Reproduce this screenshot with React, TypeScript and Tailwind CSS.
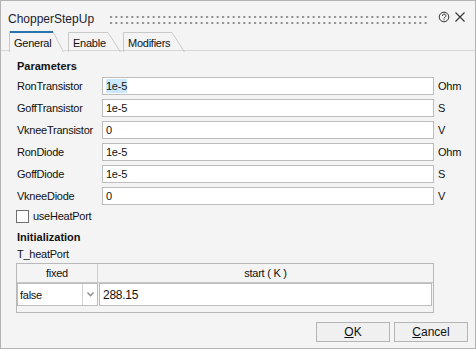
import React from "react";

const rows = [
  { label: "RonTransistor", value: "1e-5", unit: "Ohm", sel: true },
  { label: "GoffTransistor", value: "1e-5", unit: "S" },
  { label: "VkneeTransistor", value: "0", unit: "V" },
  { label: "RonDiode", value: "1e-5", unit: "Ohm" },
  { label: "GoffDiode", value: "1e-5", unit: "S" },
  { label: "VkneeDiode", value: "0", unit: "V" },
];

function Tab({ label, width, topRight, active, top }: { label: string; width: number; topRight: number; active?: boolean; top: number }) {
  return (
    <div
      className={`relative h-[21px] flex items-center ${active ? "z-10 bg-[#f4f4f4]" : ""}`}
      style={{ width }}
    >
      <svg className="absolute inset-0" width={width} height={21}>
        <path
          d={`M0.5,21 V${top + 0.5} H${topRight} L${width - 0.5},21`}
          fill="none"
          stroke="#c9c9c9"
          strokeWidth={1}
        />
        {active && <rect x={1} y={0} width={topRight - 1} height={2} fill="#2872b0" />}
      </svg>
      <span className="relative pl-[5px] pt-[2px]">{label}</span>
    </div>
  );
}

export default function App() {
  return (
    <div
      className="w-[476px] h-[349px] bg-[#f4f4f4] border border-[#b3b3b3] flex flex-col text-[11px] leading-[14px] text-[#111] tracking-[-0.25px]"
      style={{ fontFamily: "'Liberation Sans', Arial, sans-serif" }}
    >
      {/* Title bar */}
      <div className="h-[30px] flex items-center pl-[7px] pr-[9px] pt-[6px]">
        <span className="text-[12px] tracking-normal text-[#1b1b2e]">ChopperStepUp</span>
        <svg className="flex-1 h-[8px] ml-[16px] mr-[10px] mt-[1px]">
          <defs>
            <pattern id="grip" width="5.333" height="6" patternUnits="userSpaceOnUse">
              <rect x="0" y="0" width="2" height="2" fill="#8c8c8c" />
            </pattern>
          </defs>
          <rect width="100%" height="100%" fill="url(#grip)" />
        </svg>
        <div className="flex items-center gap-[4px] mb-[5px]">
          <svg width="12" height="12" viewBox="0 0 12 12">
            <circle cx="6" cy="6" r="4.8" fill="none" stroke="#333" strokeWidth="1" />
            <path d="M4.4,4.9 A1.7,1.7 0 1 1 6.9,6.3 C6.3,6.6 6,6.9 6,7.5" fill="none" stroke="#333" strokeWidth="1" />
            <rect x="5.5" y="8.3" width="1" height="1" fill="#333" />
          </svg>
          <svg width="12" height="12" viewBox="0 0 12 12">
            <path d="M1.5,1.5 L10.5,10.5 M10.5,1.5 L1.5,10.5" stroke="#333" strokeWidth="1.1" />
          </svg>
        </div>
      </div>

      {/* Tabs */}
      <div className="h-[20px] flex items-start pl-[8px] -mb-px">
        <Tab label="General" width={55} topRight={44} active top={0} />
        <div className="w-[4px]" />
        <Tab label="Enable" width={53} topRight={40} top={1} />
        <div className="w-[2px]" />
        <Tab label="Modifiers" width={62} topRight={49} top={1} />
      </div>

      {/* Panel */}
      <div className="border-t border-[#d6d6d6] pl-[16px] pt-[8px] flex flex-col">
        <div className="font-bold tracking-normal h-[14px]">Parameters</div>
        <div className="flex flex-col gap-[4px] mt-[4px]">
          {rows.map((r) => (
            <div key={r.label} className="flex items-center h-[18px]">
              <span className="w-[85px]">{r.label}</span>
              <div className="w-[332px] h-[18px] bg-white border border-[#bdbdbd] flex items-center pl-[3px]">
                <span className={r.sel ? "bg-[#cce8ff]" : ""}>{r.value}</span>
              </div>
              <span className="ml-[4px]">{r.unit}</span>
            </div>
          ))}
        </div>
        <div className="flex items-center h-[14px] mt-[4px]">
          <div className="w-[13px] h-[13px] -ml-px bg-white border border-[#707070]" />
          <span className="ml-[4px]">useHeatPort</span>
        </div>
        <div className="font-bold tracking-normal h-[14px] mt-[7px]">Initialization</div>
        <div className="h-[14px] mt-[3px]">T_heatPort</div>
        <div className="mt-[2px] -ml-px w-[418px] h-[50px] border border-[#b9b9b9] flex flex-col">
          <div className="flex h-[19px] border-b border-[#c6c6c6]">
            <div className="w-[81px] border-r border-[#d0d0d0] flex items-center justify-center">fixed</div>
            <div className="flex-1 flex items-center justify-center">start ( K )</div>
          </div>
          <div className="flex h-[23px] items-stretch">
            <div className="w-[81px] bg-white border border-[#bcbcbc] flex items-center">
              <span className="flex-1 pl-[2px]">false</span>
              <div className="w-[15px] h-full border-l border-[#d4d4d4] flex items-center justify-center">
                <svg width="7" height="5" viewBox="0 0 7 5">
                  <path d="M0.5,0.5 L3.5,3.8 L6.5,0.5" fill="none" stroke="#8a8a8a" strokeWidth="1.3" />
                </svg>
              </div>
            </div>
            <div className="w-[333px] ml-[1px] bg-white border border-[#bcbcbc] flex items-center pl-[3px] text-[12px]">
              288.15
            </div>
          </div>
        </div>
      </div>

      {/* Buttons */}
      <div className="flex justify-end gap-[4px] pr-[7px] mt-[9px]">
        <div className="w-[74px] h-[20px] bg-[#f0f0f0] border border-[#b5b5b5] flex items-center justify-center text-[12px] tracking-normal">
          <span><span className="underline">O</span>K</span>
        </div>
        <div className="w-[74px] h-[20px] bg-[#f0f0f0] border border-[#b5b5b5] flex items-center justify-center text-[12px] tracking-normal">
          <span><span className="underline">C</span>ancel</span>
        </div>
      </div>
    </div>
  );
}
